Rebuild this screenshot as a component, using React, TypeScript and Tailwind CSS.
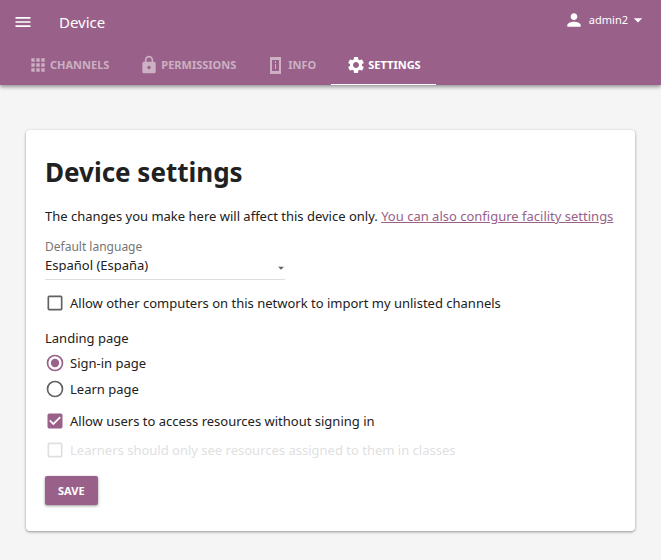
import React, { useState } from "react";
import type { ReactNode } from "react";
import { MdApps, MdArrowDropDown, MdLock, MdMenu, MdPerson, MdSettings } from "react-icons/md";

function DeviceInfoIcon() {
  return (
    <svg viewBox="0 0 20 20" className="size-5 fill-current" aria-hidden="true">
      <path fillRule="evenodd" d="M4 2h11v17H4zM6 5v11h7V5z" />
      <path d="M9 6h1v2H9zM9 9h1v5H9z" />
    </svg>
  );
}

function Tab({ icon, label, active = false }: { icon: ReactNode; label: string; active?: boolean }) {
  return (
    <a
      href="#"
      aria-current={active ? "page" : undefined}
      className={`flex h-[41px] items-center gap-[2px] border-b px-[15px] pt-[2px] text-[11px] font-bold uppercase ${
        active ? "border-white text-white" : "border-transparent text-white/50"
      }`}
    >
      {icon}
      {label}
    </a>
  );
}

function Checkbox({ label, checked = false, disabled = false, className = "" }: { label: string; checked?: boolean; disabled?: boolean; className?: string }) {
  const [on, setOn] = useState(checked);
  return (
    <label className={`flex items-center gap-[5px] ${disabled ? "text-[#dfdfdf]" : ""} ${className}`}>
      <input type="checkbox" checked={on} disabled={disabled} onChange={() => setOn(!on)} className="sr-only" />
      <svg viewBox="0 0 24 24" className={`size-5 shrink-0 ${disabled ? "fill-[#dfdfdf]" : on ? "fill-[#996189]" : "fill-[#616161]"}`}>
        {on ? (
          <path d="M19 3H5a2 2 0 0 0-2 2v14a2 2 0 0 0 2 2h14a2 2 0 0 0 2-2V5a2 2 0 0 0-2-2zm-9 14-5-5 1.41-1.41L10 14.17l7.59-7.59L19 8l-9 9z" />
        ) : (
          <path d="M19 5v14H5V5h14m0-2H5a2 2 0 0 0-2 2v14a2 2 0 0 0 2 2h14a2 2 0 0 0 2-2V5a2 2 0 0 0-2-2z" />
        )}
      </svg>
      <span>{label}</span>
    </label>
  );
}

function Radio({ label, selected, onSelect }: { label: string; selected: boolean; onSelect: () => void }) {
  return (
    <label className="flex h-[26px] items-center gap-[5px]">
      <input type="radio" name="landing" checked={selected} onChange={onSelect} className="sr-only" />
      <svg viewBox="0 0 24 24" className={`size-5 shrink-0 ${selected ? "fill-[#996189]" : "fill-[#616161]"}`}>
        <path d="M12 2a10 10 0 1 0 0 20 10 10 0 0 0 0-20zm0 18a8 8 0 1 1 0-16 8 8 0 0 1 0 16z" />
        {selected && <circle cx="12" cy="12" r="5" />}
      </svg>
      <span>{label}</span>
    </label>
  );
}

export default function App() {
  const [landing, setLanding] = useState("sign-in");
  return (
    <div className="min-h-screen bg-[#f5f5f5] font-['Noto_Sans',sans-serif] text-[13px] leading-5 text-[#212121]">
      <header className="bg-[#996189] text-white shadow-[0_2px_4px_rgba(0,0,0,0.4)]">
        <div className="flex h-11 items-center px-[13px]">
          <button aria-label="Open menu">
            <MdMenu size={20} />
          </button>
          <h1 className="ml-[26px] text-[15px]">Device</h1>
          <button className="ml-auto flex items-end pb-1 text-[11px] leading-5">
            <MdPerson size={20} className="mr-[5px]" />
            admin2
            <MdArrowDropDown size={20} />
          </button>
        </div>
        <nav aria-label="Device" className="flex px-[13px]">
          <Tab icon={<MdApps size={20} />} label="Channels" />
          <Tab icon={<MdLock size={20} />} label="Permissions" />
          <Tab icon={<DeviceInfoIcon />} label="Info" />
          <Tab icon={<MdSettings size={20} />} label="Settings" active />
        </nav>
      </header>

      <main className="px-[26px] pt-[45px] pb-7">
        <section className="rounded-sm bg-white px-[19px] pt-6 pb-[26px] shadow-[0_1px_3px_rgba(0,0,0,0.4)]">
          <h2 className="text-[26px] leading-9 font-bold">Device settings</h2>
          <p className="mt-4">
            The changes you make here will affect this device only.{" "}
            <a href="#" className="text-[#996189] underline">
              You can also configure facility settings
            </a>
          </p>

          <div className="mt-[11px] w-60">
            <label htmlFor="language" className="block text-xs leading-5 text-[#757575]">
              Default language
            </label>
            <div className="relative">
              <select id="language" className="block h-[23px] w-full appearance-none border-b border-[#dedede] bg-transparent pb-[7px] leading-4">
                <option>Español (España)</option>
              </select>
              <MdArrowDropDown size={14} className="pointer-events-none absolute top-1 -right-[3px] text-[#616161]" />
            </div>
          </div>

          <Checkbox className="mt-[13px]" label="Allow other computers on this network to import my unlisted channels" />

          <fieldset className="mt-[15px]">
            <legend className="mb-[2px]">Landing page</legend>
            <Radio label="Sign-in page" selected={landing === "sign-in"} onSelect={() => setLanding("sign-in")} />
            <Radio label="Learn page" selected={landing === "learn"} onSelect={() => setLanding("learn")} />
          </fieldset>

          <Checkbox className="mt-[9px]" label="Allow users to access resources without signing in" checked />
          <Checkbox className="mt-[9px]" label="Learners should only see resources assigned to them in classes" disabled />

          <button className="mt-4 block h-[29px] rounded-[2px] bg-[#996189] px-[13px] text-[11px] font-bold text-white uppercase shadow-[0_1px_3px_rgba(0,0,0,0.4)]">
            Save
          </button>
        </section>
      </main>
    </div>
  );
}
